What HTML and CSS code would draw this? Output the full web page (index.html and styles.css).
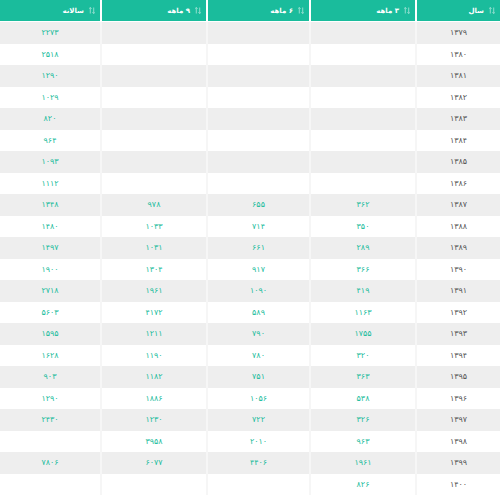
FILE: index.html
```html
<!DOCTYPE html>
<html lang="fa" dir="rtl">
<head>
<meta charset="utf-8">
<link rel="stylesheet" href="styles.css">
</head>
<body>
<table class="grid">
<colgroup>
<col class="c-year"><col class="c-q"><col class="c-h"><col class="c-n"><col class="c-y">
</colgroup>
<thead>
<tr>
<th><span class="sort"><svg viewBox="0 0 7 8" width="6" height="7"><path d="M1.5 0.5v7M0 2l1.5-1.5L3 2M5.5 0.5v7M4 6l1.5 1.5L7 6" fill="none" stroke="#fff" stroke-width="1"/></svg></span>سال</th>
<th><span class="sort"><svg viewBox="0 0 7 8" width="6" height="7"><path d="M1.5 0.5v7M0 2l1.5-1.5L3 2M5.5 0.5v7M4 6l1.5 1.5L7 6" fill="none" stroke="#fff" stroke-width="1"/></svg></span>۳ ماهه</th>
<th><span class="sort"><svg viewBox="0 0 7 8" width="6" height="7"><path d="M1.5 0.5v7M0 2l1.5-1.5L3 2M5.5 0.5v7M4 6l1.5 1.5L7 6" fill="none" stroke="#fff" stroke-width="1"/></svg></span>۶ ماهه</th>
<th><span class="sort"><svg viewBox="0 0 7 8" width="6" height="7"><path d="M1.5 0.5v7M0 2l1.5-1.5L3 2M5.5 0.5v7M4 6l1.5 1.5L7 6" fill="none" stroke="#fff" stroke-width="1"/></svg></span>۹ ماهه</th>
<th><span class="sort"><svg viewBox="0 0 7 8" width="6" height="7"><path d="M1.5 0.5v7M0 2l1.5-1.5L3 2M5.5 0.5v7M4 6l1.5 1.5L7 6" fill="none" stroke="#fff" stroke-width="1"/></svg></span>سالانه</th>
</tr>
</thead>
<tbody>
<tr><td class="yr">۱۳۷۹</td><td></td><td></td><td></td><td>۲۲۷۳</td></tr>
<tr><td class="yr">۱۳۸۰</td><td></td><td></td><td></td><td>۲۵۱۸</td></tr>
<tr><td class="yr">۱۳۸۱</td><td></td><td></td><td></td><td>۱۲۹۰</td></tr>
<tr><td class="yr">۱۳۸۲</td><td></td><td></td><td></td><td>۱۰۲۹</td></tr>
<tr><td class="yr">۱۳۸۳</td><td></td><td></td><td></td><td>۸۲۰</td></tr>
<tr><td class="yr">۱۳۸۴</td><td></td><td></td><td></td><td>۹۶۴</td></tr>
<tr><td class="yr">۱۳۸۵</td><td></td><td></td><td></td><td>۱۰۹۳</td></tr>
<tr><td class="yr">۱۳۸۶</td><td></td><td></td><td></td><td>۱۱۱۲</td></tr>
<tr><td class="yr">۱۳۸۷</td><td>۳۶۲</td><td>۶۵۵</td><td>۹۷۸</td><td>۱۳۴۸</td></tr>
<tr><td class="yr">۱۳۸۸</td><td>۳۵۰</td><td>۷۱۴</td><td>۱۰۳۳</td><td>۱۴۸۰</td></tr>
<tr><td class="yr">۱۳۸۹</td><td>۲۸۹</td><td>۶۶۱</td><td>۱۰۳۱</td><td>۱۴۹۷</td></tr>
<tr><td class="yr">۱۳۹۰</td><td>۳۶۶</td><td>۹۱۷</td><td>۱۳۰۴</td><td>۱۹۰۰</td></tr>
<tr><td class="yr">۱۳۹۱</td><td>۴۱۹</td><td>۱۰۹۰</td><td>۱۹۶۱</td><td>۲۷۱۸</td></tr>
<tr><td class="yr">۱۳۹۲</td><td>۱۱۶۳</td><td>۵۸۹</td><td>۴۱۷۲</td><td>۵۶۰۳</td></tr>
<tr><td class="yr">۱۳۹۳</td><td>۱۷۵۵</td><td>۷۹۰</td><td>۱۲۱۱</td><td>۱۵۹۵</td></tr>
<tr><td class="yr">۱۳۹۴</td><td>۳۲۰</td><td>۷۸۰</td><td>۱۱۹۰</td><td>۱۶۲۸</td></tr>
<tr><td class="yr">۱۳۹۵</td><td>۳۶۳</td><td>۷۵۱</td><td>۱۱۸۲</td><td>۹۰۳</td></tr>
<tr><td class="yr">۱۳۹۶</td><td>۵۳۸</td><td>۱۰۵۶</td><td>۱۸۸۶</td><td>۱۲۹۰</td></tr>
<tr><td class="yr">۱۳۹۷</td><td>۳۲۶</td><td>۷۲۲</td><td>۱۲۳۰</td><td>۲۴۳۰</td></tr>
<tr><td class="yr">۱۳۹۸</td><td>۹۶۳</td><td>۲۰۱۰</td><td>۳۹۵۸</td><td></td></tr>
<tr><td class="yr">۱۳۹۹</td><td>۱۹۶۱</td><td>۴۴۰۶</td><td>۶۰۷۷</td><td>۷۸۰۶</td></tr>
<tr><td class="yr">۱۴۰۰</td><td>۸۲۶</td><td></td><td></td><td></td></tr>
</tbody>
</table>
</body>
</html>
```
FILE: styles.css
```css
html, body {
  margin: 0;
  padding: 0;
  background: #fff;
}
body {
  font-family: "DejaVu Sans", "Noto Sans", sans-serif;
  font-size: 8px;
  overflow: hidden;
}
.grid {
  width: 500px;
  border-collapse: collapse;
  table-layout: fixed;
  direction: rtl;
}
.c-year { width: 84px; }
.c-q { width: 106px; }
.c-h { width: 103px; }
.c-n { width: 106px; }
.c-y { width: 101px; }
.grid th {
  background: #1abc9c;
  color: #fff;
  font-weight: bold;
  font-size: 7px;
  height: 21px;
  padding: 0 5px 0 0;
  text-align: right;
  border-left: 2px solid #fff;
  border-bottom: 1px solid #fff;
}
.grid th:last-child { border-left: none; }
.sort {
  display: inline-block;
  margin-left: 5px;
  vertical-align: middle;
  opacity: 0.6;
}
.sort svg { display: block; }
.grid td {
  height: 21.5px;
  padding: 0;
  text-align: center;
  color: #1abc9c;
  font-size: 8px;
  border-left: 2px solid #f6f6f6;
}
.grid td:last-child { border-left: none; }
.grid td.yr { color: #555; }
.grid tbody tr:nth-child(odd) td { background: #eeeeee; }
.grid tbody tr:nth-child(even) td { background: #fff; }
```
